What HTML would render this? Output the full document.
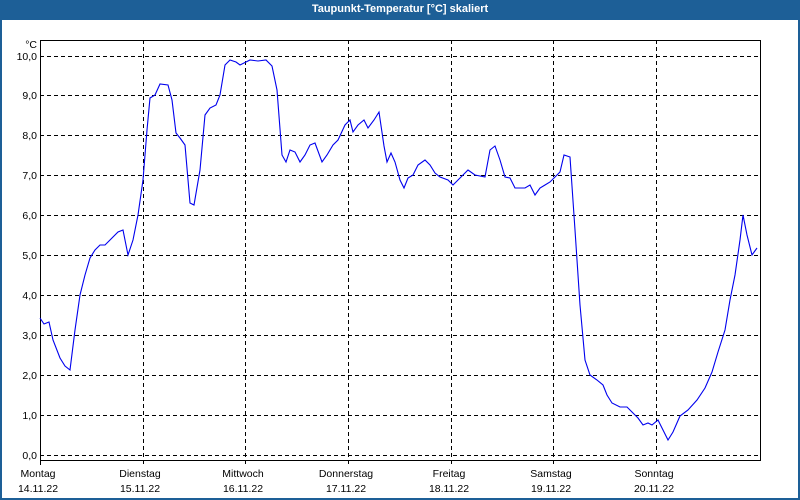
<!DOCTYPE html>
<html><head><style>
body{margin:0;width:800px;height:500px;overflow:hidden;background:#fff;font-family:"Liberation Sans",sans-serif;}
.win{position:absolute;left:0;top:0;width:796px;height:478px;border:2px solid #1d5f97;border-top:20px solid #1d5f97;background:#fff;}
.title{position:absolute;left:0;top:0;width:800px;height:20px;line-height:19px;text-align:center;color:#fff;font-weight:bold;font-size:11px;}
text{font-family:"Liberation Sans",sans-serif;font-size:10.5px;fill:#000;}
</style></head><body>
<div class="win"></div>
<div class="title">Taupunkt-Temperatur [°C] skaliert</div>
<svg width="800" height="500" style="position:absolute;left:0;top:0">
<g stroke="#000" stroke-dasharray="4,3" stroke-width="1">
<line x1="40" x2="760" y1="56.5" y2="56.5"/><line x1="40" x2="760" y1="95.5" y2="95.5"/><line x1="40" x2="760" y1="135.5" y2="135.5"/><line x1="40" x2="760" y1="175.5" y2="175.5"/><line x1="40" x2="760" y1="215.5" y2="215.5"/><line x1="40" x2="760" y1="255.5" y2="255.5"/><line x1="40" x2="760" y1="295.5" y2="295.5"/><line x1="40" x2="760" y1="335.5" y2="335.5"/><line x1="40" x2="760" y1="375.5" y2="375.5"/><line x1="40" x2="760" y1="415.5" y2="415.5"/><line x1="40" x2="760" y1="455.5" y2="455.5"/>
<line x1="143.5" x2="143.5" y1="40" y2="465"/><line x1="245.5" x2="245.5" y1="40" y2="465"/><line x1="348.5" x2="348.5" y1="40" y2="465"/><line x1="451.5" x2="451.5" y1="40" y2="465"/><line x1="553.5" x2="553.5" y1="40" y2="465"/><line x1="656.5" x2="656.5" y1="40" y2="465"/>
</g>
<polyline fill="none" stroke="#000" stroke-width="1" points="40.5,40 40.5,460.5 760.5,460.5 760.5,40.5 40.5,40.5"/>
<line x1="40.5" x2="40.5" y1="460" y2="465" stroke="#000"/>
<polyline fill="none" stroke="#0000ee" stroke-width="1.1" points="40,318 44,324 49,322 53,340 60,358 65,366 70,370 75,330 80,295 85,275 90,258 95,250 100,245 105,245 110,240 118,232 123,230 128,255 133,240 138,215 143,180 147,130 150,98 155,95 160,84 168,85 172,100 176,133 180,138 185,145 190,203 194,205 200,170 205,115 210,108 216,105 220,95 225,65 230,60 236,62 240,65 246,62 250,60 258,61 266,60 272,66 277,90 282,155 286,162 290,150 295,152 300,162 305,155 310,145 315,143 322,162 327,155 333,145 338,140 345,125 350,120 353,132 358,125 364,120 368,128 374,120 379,112 384,146 387,162 391,153 395,162 400,180 404,188 408,178 413,175 418,165 425,160 430,165 435,173 440,177 448,180 453,185 458,180 463,175 468,170 475,175 485,177 490,150 495,146 500,160 505,177 510,178 515,188 525,188 530,185 535,195 540,188 545,185 550,182 555,177 560,172 564,155 570,157 575,230 580,305 585,360 590,375 597,380 603,385 607,395 612,403 620,407 627,407 633,413 638,418 643,425 648,423 652,425 658,420 662,428 668,440 673,432 680,416 688,410 697,400 705,388 712,372 718,352 725,330 730,300 735,275 740,240 743,215 747,235 752,255 757,248"/>
<g text-anchor="end">
<text x="37" y="48">°C</text>
<text x="37" y="60">10,0</text><text x="37" y="99">9,0</text><text x="37" y="139">8,0</text><text x="37" y="179">7,0</text><text x="37" y="219">6,0</text><text x="37" y="259">5,0</text><text x="37" y="299">4,0</text><text x="37" y="339">3,0</text><text x="37" y="379">2,0</text><text x="37" y="419">1,0</text><text x="37" y="459">0,0</text>
</g>
<g text-anchor="middle">
<text x="38" y="477">Montag</text><text x="38" y="492">14.11.22</text>
<text x="140" y="477">Dienstag</text><text x="140" y="492">15.11.22</text>
<text x="243" y="477">Mittwoch</text><text x="243" y="492">16.11.22</text>
<text x="346" y="477">Donnerstag</text><text x="346" y="492">17.11.22</text>
<text x="449" y="477">Freitag</text><text x="449" y="492">18.11.22</text>
<text x="551" y="477">Samstag</text><text x="551" y="492">19.11.22</text>
<text x="654" y="477">Sonntag</text><text x="654" y="492">20.11.22</text>
</g>
</svg>
</body></html>
